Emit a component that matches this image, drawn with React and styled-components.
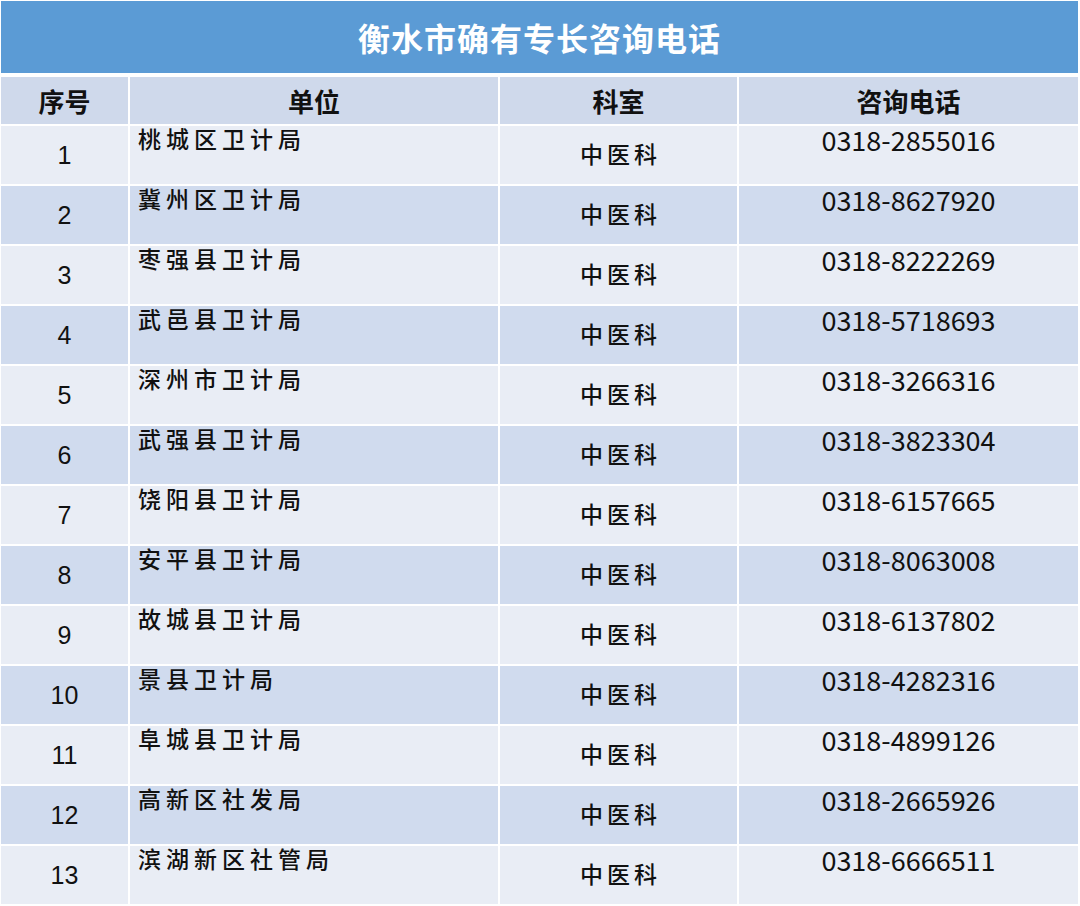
import React from 'react'
import styled, { createGlobalStyle } from 'styled-components'

const rows = [
  ['1', '桃城区卫计局', '0318-2855016'],
  ['2', '冀州区卫计局', '0318-8627920'],
  ['3', '枣强县卫计局', '0318-8222269'],
  ['4', '武邑县卫计局', '0318-5718693'],
  ['5', '深州市卫计局', '0318-3266316'],
  ['6', '武强县卫计局', '0318-3823304'],
  ['7', '饶阳县卫计局', '0318-6157665'],
  ['8', '安平县卫计局', '0318-8063008'],
  ['9', '故城县卫计局', '0318-6137802'],
  ['10', '景县卫计局', '0318-4282316'],
  ['11', '阜城县卫计局', '0318-4899126'],
  ['12', '高新区社发局', '0318-2665926'],
  ['13', '滨湖新区社管局', '0318-6666511'],
]

const GlobalStyle = createGlobalStyle`
  html, body {
    margin: 0;
    padding: 0;
    background: #fff;
  }
  body {
    font-family: "Noto Sans CJK SC", "Noto Sans", sans-serif;
  }
`

const App = () => {
  return (
    <>
      <GlobalStyle />
      <Page>
        <Table>
          <Title>衡水市确有专长咨询电话</Title>
          <HeadCell>序号</HeadCell>
          <HeadCell>单位</HeadCell>
          <HeadCell>科室</HeadCell>
          <HeadCell>咨询电话</HeadCell>
          {rows.map(([no, unit, phone], i) => (
            <React.Fragment key={no}>
              <NoCell striped={i % 2 === 1}>{no}</NoCell>
              <UnitCell striped={i % 2 === 1}>{unit}</UnitCell>
              <DeptCell striped={i % 2 === 1}>中医科</DeptCell>
              <PhoneCell striped={i % 2 === 1}>{phone}</PhoneCell>
            </React.Fragment>
          ))}
        </Table>
      </Page>
    </>
  )
}

const Page = styled.div`
  width: 1080px;
  height: 906px;
  padding: 1px 2px 0 1px;
  box-sizing: border-box;
  background: #fff;
`

const Table = styled.div`
  display: grid;
  grid-template-columns: 127px 368px 237px 1fr;
  grid-template-rows: 74px 47px repeat(13, 58px);
  gap: 2px;
  background: #fff;
`

const Title = styled.div`
  grid-column: 1 / -1;
  margin-bottom: 2px;
  background: #5b9bd5;
  color: #fff;
  font-size: 32px;
  font-weight: 700;
  display: flex;
  align-items: center;
  justify-content: center;
  letter-spacing: 1px;
`

const HeadCell = styled.div`
  background: #cfd9eb;
  color: #111;
  font-size: 26px;
  font-weight: 700;
  display: flex;
  align-items: center;
  justify-content: center;
`

const Cell = styled.div`
  background: ${props => (props.striped ? '#d0dbee' : '#e9edf5')};
  color: #111;
  display: flex;
`

const NoCell = styled(Cell)`
  font-family: "Liberation Sans", Arial, sans-serif;
  font-size: 25px;
  align-items: center;
  justify-content: center;
`

const UnitCell = styled(Cell)`
  font-size: 23px;
  font-weight: 500;
  letter-spacing: 5px;
  line-height: 24px;
  padding: 0 0 0 8px;
  align-items: flex-start;
`

const DeptCell = styled(Cell)`
  font-size: 23px;
  font-weight: 500;
  letter-spacing: 4px;
  align-items: center;
  justify-content: center;
  padding: 0 0 4px 4px;
`

const PhoneCell = styled(Cell)`
  font-size: 27px;
  align-items: flex-start;
  justify-content: center;
  line-height: 28px;
`

export default App
